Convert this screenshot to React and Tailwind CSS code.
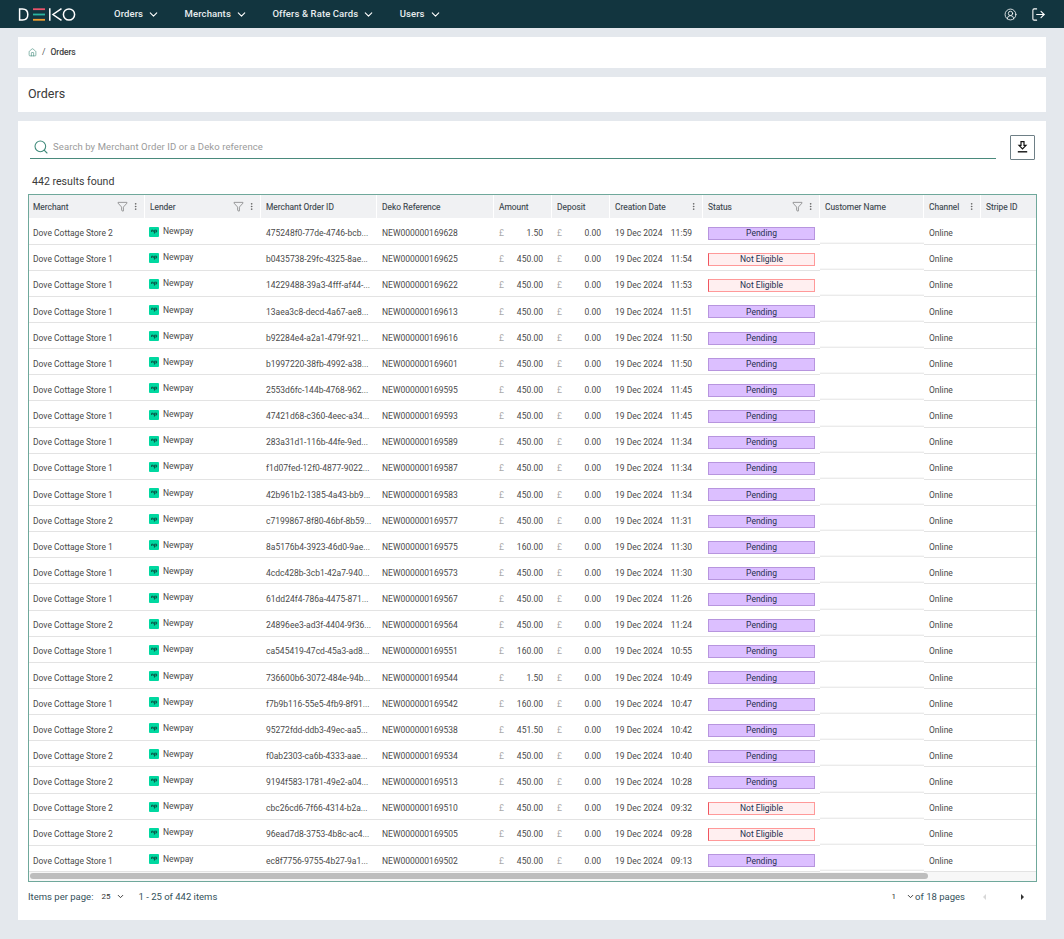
import React from 'react'
import { ChevronDown, CircleUserRound, LogOut, House, Search, Funnel, EllipsisVertical } from 'lucide-react'

const NAV_ITEMS = ['Orders', 'Merchants', 'Offers & Rate Cards', 'Users']

const COLUMNS = [
  { name: 'Merchant', w: 'w-[116px] pl-[4px]', filter: true, menu: true },
  { name: 'Lender', w: 'w-[116px] pl-[5px]', filter: true, menu: true },
  { name: 'Merchant Order ID', w: 'w-[116px] pl-[5px]' },
  { name: 'Deko Reference', w: 'w-[117px] pl-[5px]' },
  { name: 'Amount', w: 'w-[58px] pl-[5px]' },
  { name: 'Deposit', w: 'w-[58px] pl-[5px]' },
  { name: 'Creation Date', w: 'w-[93px] pl-[5px]', menu: true },
  { name: 'Status', w: 'w-[117px] pl-[5px]', filter: true, menu: true },
  { name: 'Customer Name', w: 'w-[104px] pl-[5px]' },
  { name: 'Channel', w: 'w-[57px] pl-[5px]', menu: true },
  { name: 'Stripe ID', w: 'w-[55px] pl-[5px]' },
]

// store, order id, reference, amount, time, status
const ORDERS = [
  [2, '475248f0-77de-4746-bcb...', '169628', '1.50', '11:59', 'P'],
  [1, 'b0435738-29fc-4325-8ae...', '169625', '450.00', '11:54', 'N'],
  [1, '14229488-39a3-4fff-af44-...', '169622', '450.00', '11:53', 'N'],
  [1, '13aea3c8-decd-4a67-ae8...', '169613', '450.00', '11:51', 'P'],
  [1, 'b92284e4-a2a1-479f-921...', '169616', '450.00', '11:50', 'P'],
  [1, 'b1997220-38fb-4992-a38...', '169601', '450.00', '11:50', 'P'],
  [1, '2553d6fc-144b-4768-962...', '169595', '450.00', '11:45', 'P'],
  [1, '47421d68-c360-4eec-a34...', '169593', '450.00', '11:45', 'P'],
  [1, '283a31d1-116b-44fe-9ed...', '169589', '450.00', '11:34', 'P'],
  [1, 'f1d07fed-12f0-4877-9022...', '169587', '450.00', '11:34', 'P'],
  [1, '42b961b2-1385-4a43-bb9...', '169583', '450.00', '11:34', 'P'],
  [2, 'c7199867-8f80-46bf-8b59...', '169577', '450.00', '11:31', 'P'],
  [1, '8a5176b4-3923-46d0-9ae...', '169575', '160.00', '11:30', 'P'],
  [1, '4cdc428b-3cb1-42a7-940...', '169573', '450.00', '11:30', 'P'],
  [1, '61dd24f4-786a-4475-871...', '169567', '450.00', '11:26', 'P'],
  [2, '24896ee3-ad3f-4404-9f36...', '169564', '450.00', '11:24', 'P'],
  [1, 'ca545419-47cd-45a3-ad8...', '169551', '160.00', '10:55', 'P'],
  [2, '736600b6-3072-484e-94b...', '169544', '1.50', '10:49', 'P'],
  [1, 'f7b9b116-55e5-4fb9-8f91...', '169542', '160.00', '10:47', 'P'],
  [2, '95272fdd-ddb3-49ec-aa5...', '169538', '451.50', '10:42', 'P'],
  [2, 'f0ab2303-ca6b-4333-aae...', '169534', '450.00', '10:40', 'P'],
  [2, '9194f583-1781-49e2-a04...', '169513', '450.00', '10:28', 'P'],
  [2, 'cbc26cd6-7f66-4314-b2a...', '169510', '450.00', '09:32', 'N'],
  [2, '96ead7d8-3753-4b8c-ac4...', '169505', '450.00', '09:28', 'N'],
  [1, 'ec8f7756-9755-4b27-9a1...', '169502', '450.00', '09:13', 'P'],
]

const CELL = 'flex shrink-0 items-center whitespace-nowrap border-b border-[#e3e3e3] pt-[5px]'

function Logo () {
  return (
    <svg width="58" height="13" viewBox="0 0 58 13" fill="none" className="block">
      <path d="M1.6 1v11h2.9c3.4 0 5.3-2.2 5.3-5.5S7.9 1 4.5 1z" stroke="#fff" strokeWidth="1.5" />
      <rect x="15" y=".3" width="12" height="1.8" fill="#e8536a" />
      <rect x="15" y="5.6" width="12" height="1.8" fill="#2bb5a0" />
      <rect x="15" y="10.9" width="12" height="1.8" fill="#f0a030" />
      <path d="M31.8 .3v12.4M43.5 .6 35 6.5l8.5 5.9" stroke="#fff" strokeWidth="1.5" />
      <circle cx="51" cy="6.5" r="5.6" stroke="#fff" strokeWidth="1.5" />
    </svg>
  )
}

function NewpayIcon () {
  return (
    <span className="flex h-[10px] w-[10px] items-center justify-center rounded-[1px] bg-[#00d8a0]">
      <svg width="7" height="5" viewBox="0 0 7 5" fill="none">
        <path d="M.6 3V1.2h1.6V3M3.4 4.6V1.2H5.6V3H3.4" stroke="#0d3b36" strokeWidth=".8" />
      </svg>
    </span>
  )
}

function ExportIcon () {
  return (
    <svg width="11" height="12" viewBox="0 0 11 12" fill="none">
      <path d="M4 .7h3v3.6h2L5.5 8 2 4.3h2z" stroke="#111" strokeWidth="1.2" />
      <path d="M.8 10.8h9.4" stroke="#111" strokeWidth="1.4" />
    </svg>
  )
}

function HeaderCell ({ col, last }) {
  return (
    <div className={`${col.w} flex h-full shrink-0 items-center justify-between pr-[4.5px] ${last ? '' : 'border-r border-white'}`}>
      <span className="translate-y-[1px] whitespace-nowrap text-[#39444b]">{col.name}</span>
      <span className="flex items-center gap-[3px]">
        {col.filter && <Funnel size={11} strokeWidth={1} className="text-[#333]" />}
        {col.menu && <EllipsisVertical size={9} strokeWidth={1.6} className="text-[#444]" />}
      </span>
    </div>
  )
}

function Status ({ value }) {
  if (value === 'N') {
    return (
      <div className="flex h-[13px] w-[107px] items-center justify-center border border-[#f99] border-l-[#f0555f] bg-[#ffeff0] text-[#26304f]">
        Not Eligible
      </div>
    )
  }
  return (
    <div className="flex h-[13px] w-[107px] items-center justify-center border border-[#b795de] bg-[#dcbfff] text-[#26304f]">
      Pending
    </div>
  )
}

function Row ({ order }) {
  const [store, id, ref, amount, time, status] = order
  return (
    <div className="flex h-[26.15px] shrink-0 items-stretch text-[8.5px] text-[#4a4a4a]">
      <div className={`${CELL} w-[116px] pl-[4px]`}>Dove Cottage Store {store}</div>
      <div className={`${CELL} w-[116px] gap-[4px] pl-[4px]`}>
        <span className="flex -translate-y-[2px] items-center gap-[4px]">
          <NewpayIcon />
          <span>Newpay</span>
        </span>
      </div>
      <div className={`${CELL} w-[116px] pl-[5px]`}>{id}</div>
      <div className={`${CELL} w-[117px] pl-[5px]`}>NEW000000{ref}</div>
      <div className={`${CELL} w-[58px] justify-between pl-[5px] pr-[9px]`}>
        <span className="text-[#aaa]">£</span>
        <span>{amount}</span>
      </div>
      <div className={`${CELL} w-[58px] justify-between pl-[5px] pr-[9px]`}>
        <span className="text-[#aaa]">£</span>
        <span>0.00</span>
      </div>
      <div className={`${CELL} w-[93px] justify-between pl-[5px] pr-[11px]`}>
        <span>19 Dec 2024</span>
        <span>{time}</span>
      </div>
      <div className={`${CELL} w-[117px] pl-[5px]`}><Status value={status} /></div>
      <div className={`${CELL} w-[104px] -translate-y-[1.3px]`} />
      <div className={`${CELL} w-[57px] pl-[5px]`}>Online</div>
      <div className={`${CELL} w-[55px]`} />
    </div>
  )
}

export default function App () {
  return (
    <div className="min-h-[939px] bg-[#e4e8ed] font-['Roboto',sans-serif]">
      <nav className="flex h-[28px] items-center bg-[#12353f] px-[18px] text-white">
        <Logo />
        <div className="ml-[38px] flex items-center gap-[24.5px] text-[9.5px] font-medium tracking-[.1px]">
          {NAV_ITEMS.map(name => (
            <div key={name} className="flex items-center gap-[4px]">
              <span className="whitespace-nowrap text-[#e8edef]">{name}</span>
              <ChevronDown size={13} strokeWidth={2} />
            </div>
          ))}
        </div>
        <div className="ml-auto flex items-center gap-[14px]">
          <CircleUserRound size={13} strokeWidth={1.5} />
          <LogOut size={15} strokeWidth={1.7} />
        </div>
      </nav>

      <div className="flex flex-col gap-[9px] px-[18px] pt-[9px]">
        <div className="flex h-[30.5px] items-center gap-[5px] bg-white pl-[10px] pt-[1px] text-[8.5px]">
          <House size={9} strokeWidth={1.6} className="text-[#3f8a7a]" />
          <span className="text-[#555]">/</span>
          <span className="text-[#333] [-webkit-text-stroke:.15px_#333]">Orders</span>
        </div>
        <div className="flex h-[35px] items-center bg-white pl-[10px] text-[12.5px] text-[#3a3a3a]">Orders</div>

        <div className="h-[799px] bg-white px-[10px] pt-[13px]">
          <div className="flex items-start justify-between pr-[1px]">
            <div className="ml-[2px] flex h-[25px] w-[966px] items-center gap-[4px] border-b border-[#4a8a7c] pl-[3px] pt-[3px]">
              <Search size={16} strokeWidth={1.6} className="text-[#3f8a7a]" />
              <span className="text-[9.5px] tracking-[.1px] text-[#9a9a9a]">Search by Merchant Order ID or a Deko reference</span>
            </div>
            <div className="mt-[1px] flex h-[25px] w-[25px] items-center justify-center rounded-[1px] border border-[#6e7f86]">
              <ExportIcon />
            </div>
          </div>

          <div className="mt-[15px] pl-[4px] text-[10.6px] leading-[14px] text-[#3a3a3a]">442 results found</div>

          <div className="mt-[5px] w-[1009px] overflow-hidden border border-[#6fa89b]">
            <div className="flex h-[23px] items-center bg-[#f0f1f3] text-[8.4px] [-webkit-text-stroke:.1px_#39444b]">
              {COLUMNS.map((col, i) => (
                <HeaderCell key={col.name} col={col} last={i === COLUMNS.length - 1} />
              ))}
            </div>
            <div className="pt-[1px]">
              {ORDERS.map(order => <Row key={order[2]} order={order} />)}
            </div>
            <div className="flex h-[8.5px] items-center bg-[#f7f7f7] pl-[1px]">
              <div className="h-[6px] w-[898px] rounded-full bg-[#bdbdbd]" />
            </div>
          </div>

          <div className="mt-[9px] flex items-center text-[9.5px] leading-[12px] text-[#33505a]">
            <span>Items per page:</span>
            <span className="ml-[8px] text-[8px] text-[#333]">25</span>
            <ChevronDown size={9} strokeWidth={2.5} className="ml-[6px] text-[#333]" />
            <span className="ml-[13px]">1 - 25 of 442 items</span>
            <span className="ml-auto text-[8px] text-[#333]">1</span>
            <ChevronDown size={9} strokeWidth={2.5} className="ml-[10px] text-[#333]" />
            <span>of 18 pages</span>
            <span className="ml-[18px] h-0 w-0 border-y-[3px] border-r-[3px] border-y-transparent border-r-[#d8d8d8]" />
            <span className="ml-[35px] mr-[12px] h-0 w-0 border-y-[3px] border-l-[3px] border-y-transparent border-l-[#333]" />
          </div>
        </div>
      </div>
    </div>
  )
}
